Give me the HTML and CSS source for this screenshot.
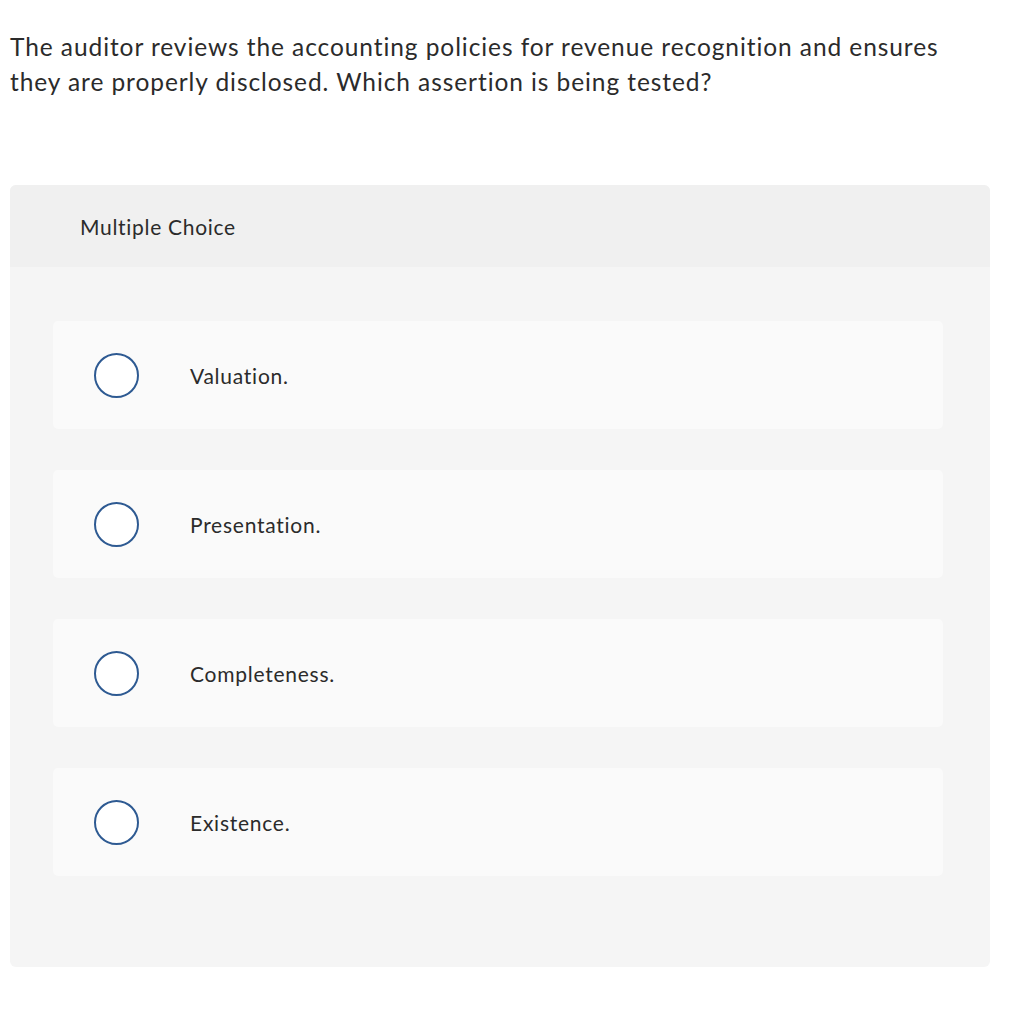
FILE: index.html
```html
<!DOCTYPE html>
<html>
<head>
<meta charset="utf-8">
<link rel="stylesheet" href="styles.css">
</head>
<body>
<div class="page">
  <p class="question">The auditor reviews the accounting policies for revenue recognition and ensures they are properly disclosed. Which assertion is being tested?</p>
  <div class="card">
    <div class="card-header">Multiple Choice</div>
    <div class="card-body">
      <div class="option"><span class="radio"></span><span class="label">Valuation.</span></div>
      <div class="option"><span class="radio"></span><span class="label">Presentation.</span></div>
      <div class="option"><span class="radio"></span><span class="label">Completeness.</span></div>
      <div class="option"><span class="radio"></span><span class="label">Existence.</span></div>
    </div>
  </div>
</div>
</body>
</html>
```
FILE: styles.css
```css
html, body {
  margin: 0;
  padding: 0;
  background: #ffffff;
}
.page {
  padding: 29px 27px 0 10px;
  font-family: Lato, "Open Sans", sans-serif;
  color: #2b2b2b;
}
.question {
  margin: 0;
  width: 940px;
  font-size: 24.5px;
  line-height: 35px;
  letter-spacing: 0.92px;
}
.card {
  margin-top: 86px;
  width: 980px;
  border-radius: 6px;
  overflow: hidden;
  background: #f5f5f5;
}
.card-header {
  height: 82px;
  box-sizing: border-box;
  padding-left: 70px;
  display: flex;
  align-items: center;
  background: #f0f0f0;
  font-size: 21px;
  letter-spacing: 0.7px;
}
.card-body {
  padding: 54px 47px 91px 43px;
  display: flex;
  flex-direction: column;
  gap: 41px;
}
.option {
  height: 108px;
  background: #fafafa;
  border-radius: 5px;
  display: flex;
  align-items: center;
  padding-left: 41px;
}
.radio {
  width: 45px;
  height: 45px;
  box-sizing: border-box;
  border: 2px solid #2e5a92;
  border-radius: 50%;
  background: #ffffff;
  flex: none;
}
.label {
  margin-left: 51px;
  font-size: 21px;
  letter-spacing: 0.75px;
}
```
